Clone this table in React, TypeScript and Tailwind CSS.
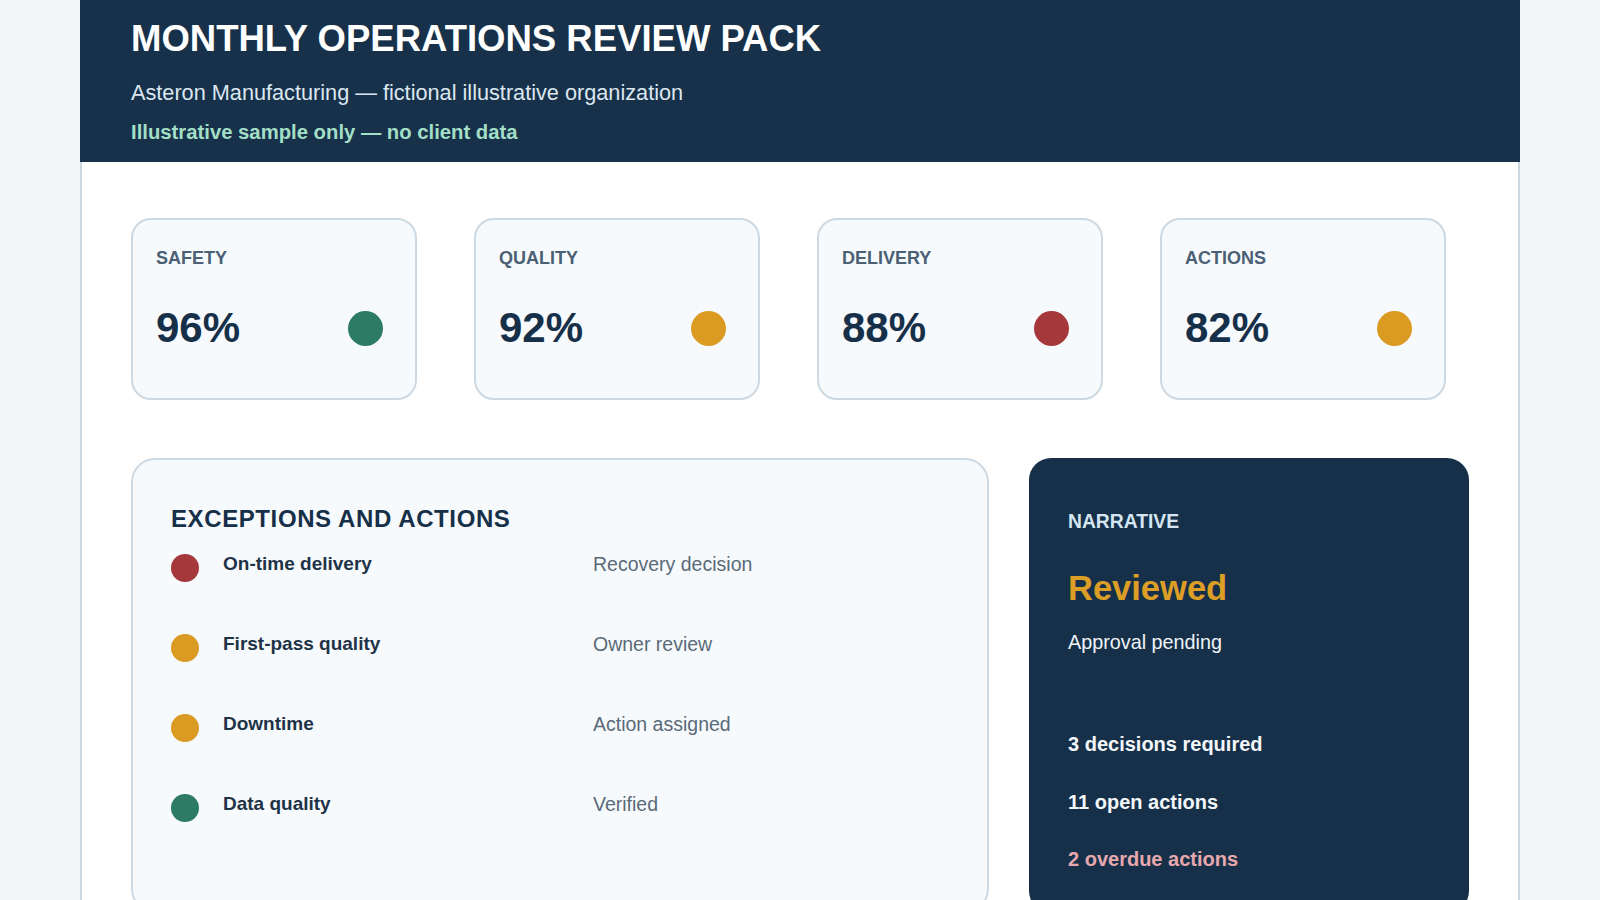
import React from "react";

type Kpi = { label: string; value: string; dot: string };

const kpis: Kpi[] = [
  { label: "SAFETY", value: "96%", dot: "bg-[#2e7b65]" },
  { label: "QUALITY", value: "92%", dot: "bg-[#db9a22]" },
  { label: "DELIVERY", value: "88%", dot: "bg-[#a5383b]" },
  { label: "ACTIONS", value: "82%", dot: "bg-[#db9a22]" },
];

type Row = { name: string; status: string; dot: string };

const rows: Row[] = [
  { name: "On-time delivery", status: "Recovery decision", dot: "bg-[#a5383b]" },
  { name: "First-pass quality", status: "Owner review", dot: "bg-[#db9a22]" },
  { name: "Downtime", status: "Action assigned", dot: "bg-[#db9a22]" },
  { name: "Data quality", status: "Verified", dot: "bg-[#2e7b65]" },
];

function KpiCard({ k }: { k: Kpi }) {
  return (
    <div className="flex h-[182px] flex-col rounded-[20px] border-2 border-[#cdd9e2] bg-[#f7fafc] px-[23px] pt-[27px]">
      <div className="text-[18px] font-bold leading-[22px] text-[#4b6074]">{k.label}</div>
      <div className="mt-[38px] flex h-[42px] items-center justify-between">
        <span className="text-[42px] font-bold leading-[42px] text-[#163049]">{k.value}</span>
        <span className={`mr-[9px] h-[35px] w-[35px] rounded-full ${k.dot}`} />
      </div>
    </div>
  );
}

export default function App() {
  return (
    <div className="min-h-screen bg-[#f3f6f8] font-['Liberation_Sans',Arial,sans-serif]">
      <div className="mx-auto w-[1440px]">
        <header className="h-[162px] bg-[#17314a] pl-[51px] pr-[50px] pt-[17px]">
          <h1 className="text-[36.5px] font-bold leading-[43px] text-white">
            MONTHLY OPERATIONS REVIEW PACK
          </h1>
          <p className="mt-[18px] text-[21.7px] leading-[30px] text-[#dce7f0]">
            Asteron Manufacturing — fictional illustrative organization
          </p>
          <p className="mt-[10px] text-[20.3px] font-bold leading-[28px] text-[#a2dfc6]">
            Illustrative sample only — no client data
          </p>
        </header>

        <main className="border-x-2 border-[#cbd7e0] bg-white px-[49px] pb-[60px] pt-[56px]">
          <div className="grid grid-cols-[repeat(4,286px)] gap-x-[57px]">
            {kpis.map((k) => (
              <KpiCard key={k.label} k={k} />
            ))}
          </div>

          <div className="mt-[58px] grid grid-cols-[1fr_440px] gap-x-[40px]">
            <section className="rounded-[24px] border-2 border-[#cdd9e2] bg-[#f7fafc] px-[38px] pb-[40px] pt-[44px]">
              <h2 className="text-[24px] font-bold leading-[29px] tracking-[0.025em] text-[#163049]">
                EXCEPTIONS AND ACTIONS
              </h2>
              <div className="mt-[17px] flex flex-col">
                {rows.map((r) => (
                  <div
                    key={r.name}
                    className="grid h-[80px] grid-cols-[28px_346px_1fr] items-start gap-x-6"
                  >
                    <span className={`mt-[4px] h-[28px] w-[28px] rounded-full ${r.dot}`} />
                    <span className="text-[19px] font-bold leading-[28px] text-[#1e3346]">
                      {r.name}
                    </span>
                    <span className="text-[19.5px] leading-[28px] text-[#5a6a79]">{r.status}</span>
                  </div>
                ))}
              </div>
            </section>

            <aside className="rounded-[22px] bg-[#163049] pb-[40px] pl-[39px] pr-[40px] pt-[52px]">
              <div className="text-[19.3px] font-bold leading-[23px] text-[#d5e5f1]">NARRATIVE</div>
              <div className="mt-[35px] text-[34.5px] font-bold leading-[40px] text-[#dd9e26]">
                Reviewed
              </div>
              <div className="mt-[21px] text-[19.8px] leading-[27px] text-[#eef3f7]">
                Approval pending
              </div>
              <div className="mt-[75px] flex flex-col gap-[30.5px]">
                <div className="text-[20px] font-bold leading-[27px] text-[#f4f7fa]">
                  3 decisions required
                </div>
                <div className="text-[20px] font-bold leading-[27px] text-[#f4f7fa]">
                  11 open actions
                </div>
                <div className="text-[20px] font-bold leading-[27px] text-[#e7a8ae]">
                  2 overdue actions
                </div>
              </div>
            </aside>
          </div>
        </main>
      </div>
    </div>
  );
}
